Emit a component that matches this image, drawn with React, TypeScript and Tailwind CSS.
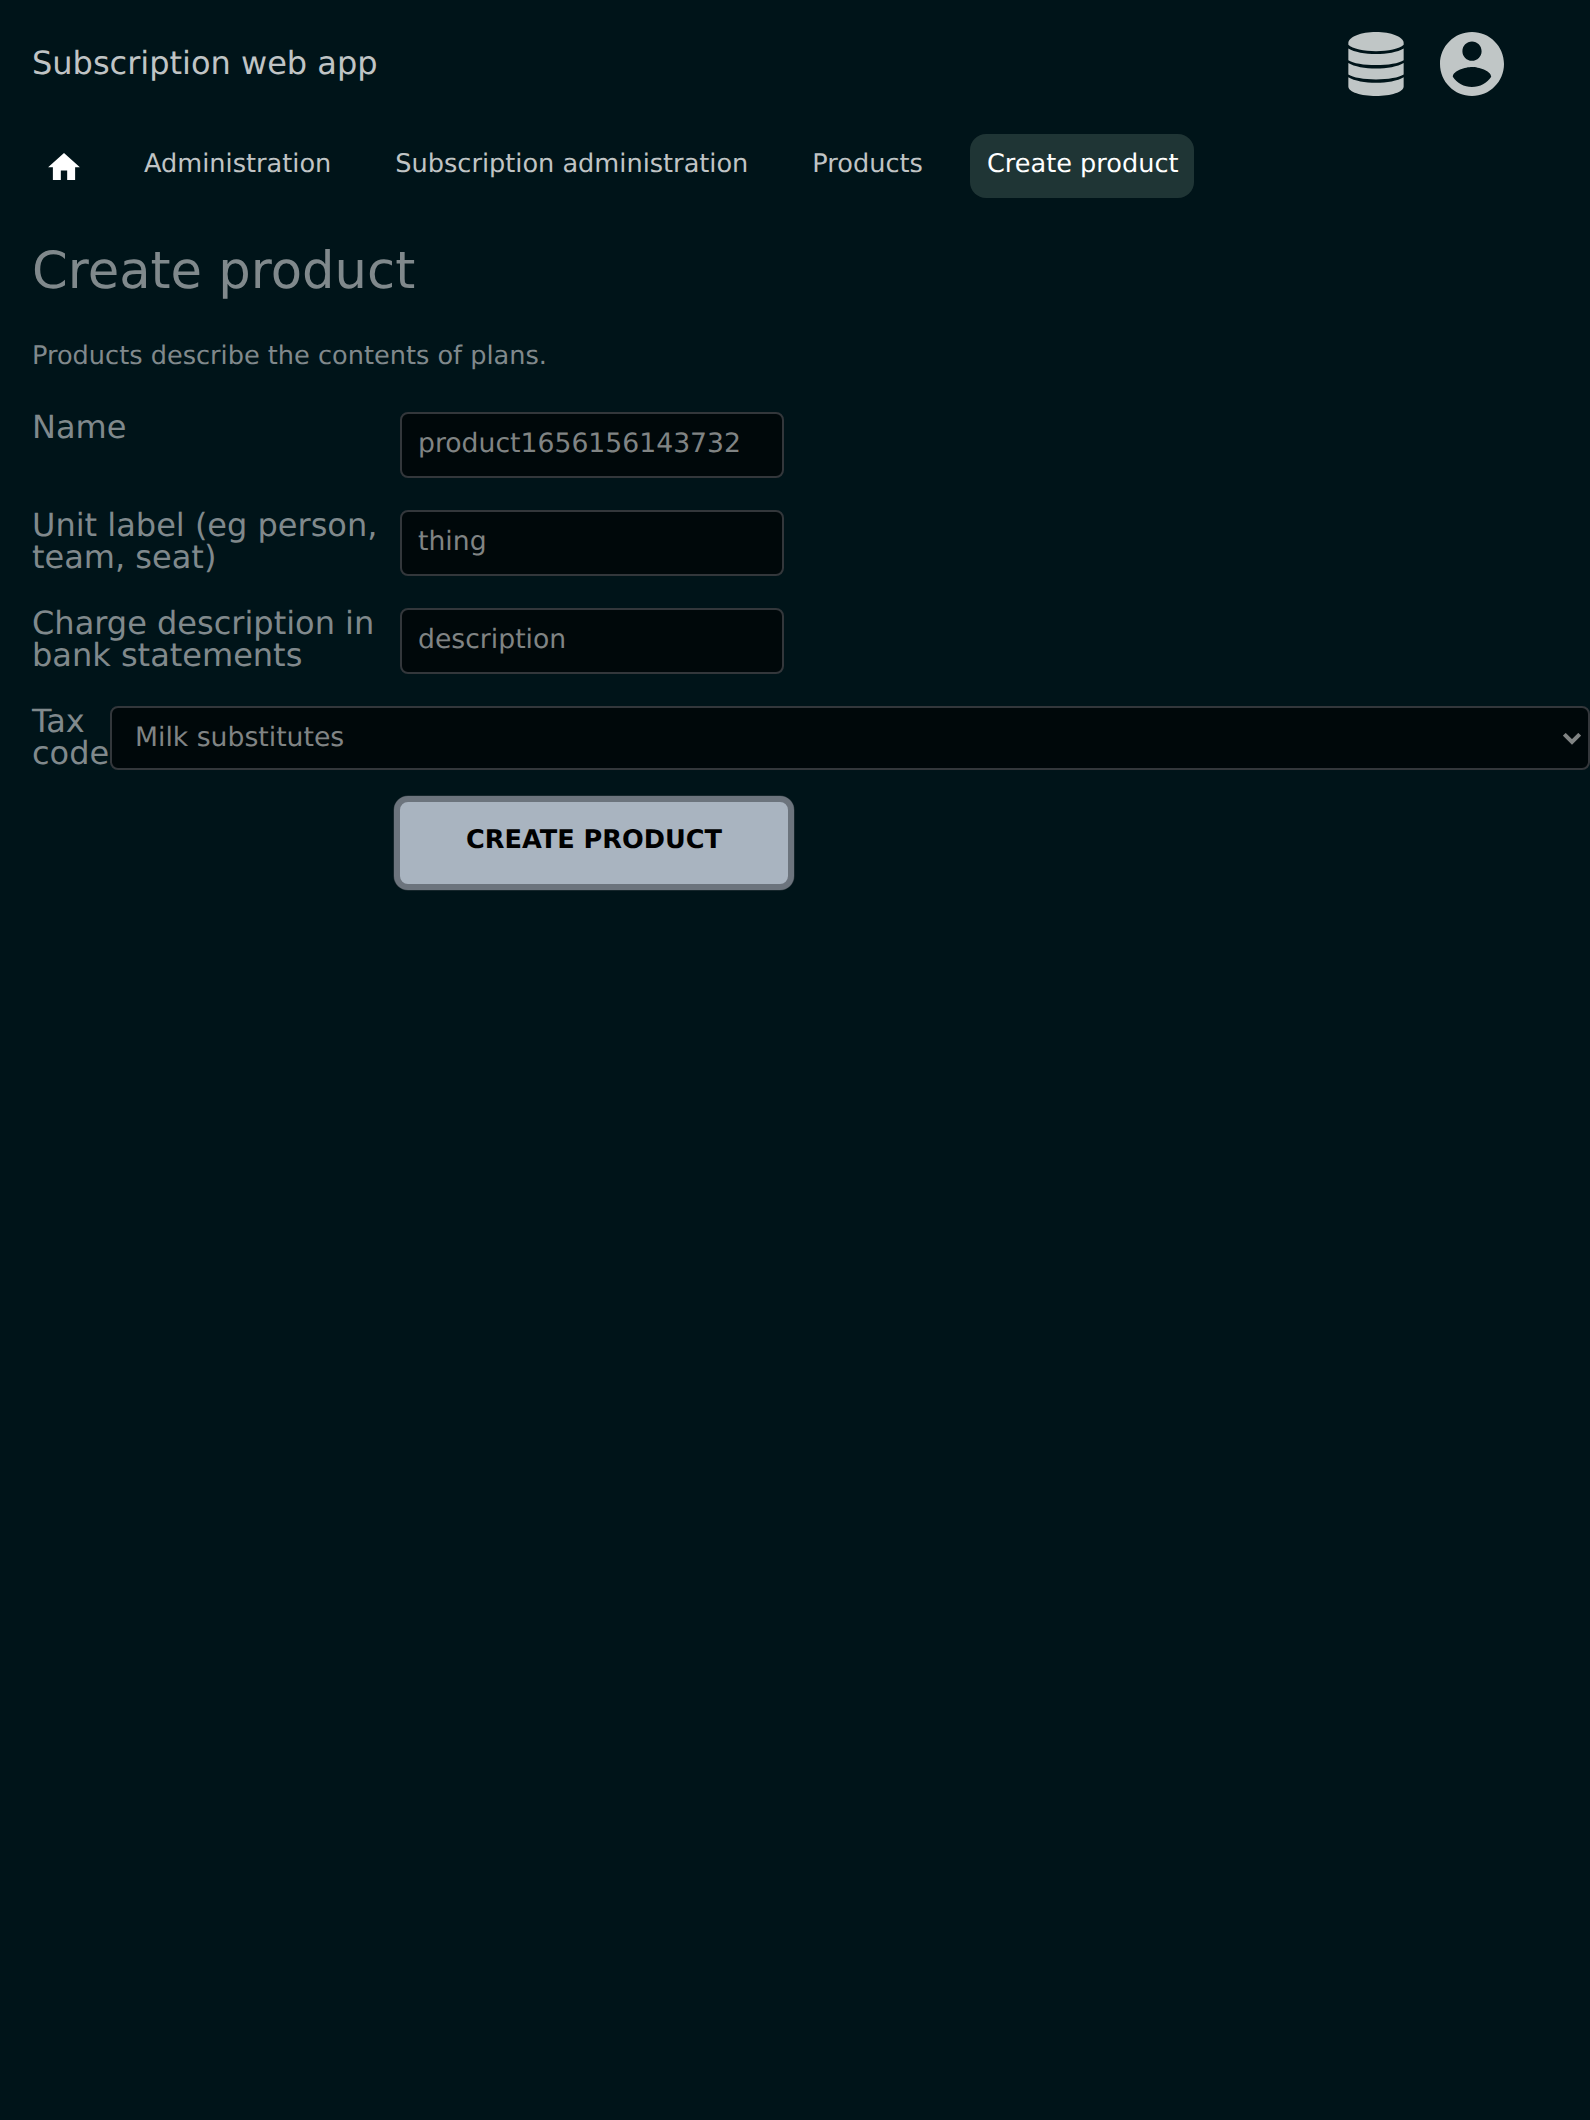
import React from "react";

const HomeIcon = () => (
  <svg viewBox="2 3 20 17" className="h-[27px] w-8 fill-white" aria-hidden="true">
    <path d="M10 20v-6h4v6h5v-8h3L12 3 2 12h3v8z" />
  </svg>
);

const DatabaseIcon = () => (
  <svg viewBox="-0.350 0 56.700 64" preserveAspectRatio="none" className="h-16 w-14 fill-[#c0c6c6]" aria-hidden="true">
    <path d="M28 0C43 0 56 4.800 56 11v1.800C52 17 40 19.200 28 19.200S4 17 0 12.800V11C0 4.800 13 0 28 0z" />
    <path d="M0 16.500C6 20.200 17 22 28 22s22-1.800 28-5.500v11.700C51.500 31.400 40 33 28 33S4.500 31.400 0 28.200z" />
    <path d="M0 30.900C6 34.600 17 36.400 28 36.400s22-1.800 28-5.500v11.700C51.500 45.800 40 47.400 28 47.400S4.500 45.800 0 42.600z" />
    <path d="M0 45.300C6 49 17 50.800 28 50.800s22-1.800 28-5.500V54.500C56 60 43 64 28 64S0 60 0 54.500z" />
  </svg>
);

const AccountIcon = () => (
  <svg viewBox="2 2 20 20" className="size-16 fill-[#c0c6c6]" aria-hidden="true">
    <path d="M12 2C6.480 2 2 6.480 2 12s4.480 10 10 10 10-4.480 10-10S17.520 2 12 2zm0 3c1.660 0 3 1.340 3 3s-1.340 3-3 3-3-1.340-3-3 1.340-3 3-3zm0 14.200c-2.500 0-4.710-1.280-6-3.220.030-1.990 4-3.080 6-3.080 1.990 0 5.970 1.090 6 3.080-1.290 1.940-3.500 3.220-6 3.220z" />
  </svg>
);

const fields = [
  { label: "Name", value: "product1656156143732" },
  { label: "Unit label (eg person, team, seat)", value: "thing" },
  { label: "Charge description in bank statements", value: "description" },
];

export default function App() {
  return (
    <div className="h-[2120px] w-[1590px] overflow-hidden bg-[#001419] font-['DejaVu_Sans',sans-serif] text-[#80898c] [text-rendering:geometricPrecision]">
      <header className="flex h-32 items-start justify-between pt-8 pr-[86px] pl-8">
        <h1 className="text-[32px] leading-[62px] whitespace-nowrap text-[#c0c4c5]">Subscription web app</h1>
        <div className="flex gap-9">
          <DatabaseIcon />
          <AccountIcon />
        </div>
      </header>

      <nav className="mt-1.5 flex h-16 gap-8 pl-8 text-[25.6px] leading-[60px] whitespace-nowrap text-[#c0c4c5]">
        <a className="px-4 pt-[19px]">
          <HomeIcon />
        </a>
        <a className="px-4">Administration</a>
        <a className="px-4">Subscription administration</a>
        <a className="px-4">Products</a>
        <a className="-ml-px rounded-2xl bg-[#1f3535] pr-[15px] pl-[17px] text-white">Create product</a>
      </nav>

      <main className="pl-8">
        <h2 className="mt-[39px] text-[51.2px] leading-[68px]">Create product</h2>
        <p className="mt-9 text-[25.6px] leading-[30px]">Products describe the contents of plans.</p>

        <form>
          <div className="mt-[41px] flex flex-col gap-8">
            {fields.map((field) => (
              <div key={field.label} className="flex h-[66px]">
                <label className="-mt-px w-[368px] shrink-0 pr-3 text-[32px] leading-8">{field.label}</label>
                <input
                  readOnly
                  value={field.value}
                  className="h-[66px] w-96 rounded-lg border-2 border-[#33373b] bg-[#00080a] px-4 pb-1 text-[26.667px] text-[#808484] outline-none [text-rendering:geometricPrecision]"
                />
              </div>
            ))}
            <div className="flex h-16">
              <label className="-mt-px w-[78px] shrink-0 text-[32px] leading-8">Tax code</label>
              <div className="flex h-16 grow items-center justify-between rounded-lg border-2 border-[#33373b] bg-[#00080a] pr-[7px] pl-[23px] text-[26.667px] text-[#808484]">
                <span className="-mt-px">Milk substitutes</span>
                <svg viewBox="0 0 18 12" className="mt-0.5 h-3 w-[18px] fill-none stroke-current stroke-[4]" aria-hidden="true">
                  <path d="M1.300 1.300L9 9l7.700-7.700" />
                </svg>
              </div>
            </div>
          </div>
          <button
            type="button"
            className="mt-[26px] ml-[362px] block h-[94px] w-[400px] rounded-[14px] border-[6px] border-[#6c747d] bg-[#a9b4c0] pb-1.5 text-[25.6px] font-bold text-black shadow-[0_0_0_0.5px_#2d393f] [text-rendering:geometricPrecision]"
          >
            CREATE PRODUCT
          </button>
        </form>
      </main>
    </div>
  );
}
